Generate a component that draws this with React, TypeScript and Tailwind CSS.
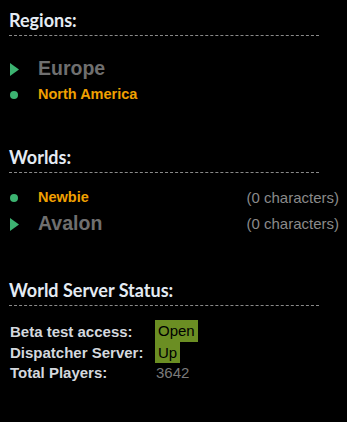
const Heading = ({ title }: { title: string }) => (
	<div className="w-[310px] border-b border-dashed border-[#8a8a8a] pb-[5px]">
		<h2 className="font-['Lato',sans-serif] font-bold text-[18px] leading-5 text-[#e4ebf3]">{title}</h2>
	</div>
)

const Triangle = () => (
	<svg width="9" height="13" viewBox="0 0 9 13" className="shrink-0">
		<polygon points="0,0 9,6.5 0,13" fill="#3cb371" />
	</svg>
)

const Dot = () => <span className="block w-[8px] h-[8px] rounded-full bg-[#3cb371] shrink-0" />

const Row = ({ active, name, extra }: { active: boolean; name: string; extra?: string }) => (
	<div className="flex items-center h-[26px]">
		<div className="w-[28px] flex items-center">
			{active ? <Dot /> : <Triangle />}
		</div>
		{active ? (
			<span className="font-bold text-[14.5px] text-[#f0a000]">{name}</span>
		) : (
			<span className="font-bold text-[19.5px] text-[#6f6f6f]">{name}</span>
		)}
		{extra && <span className="ml-auto text-[15px] text-[#8a8a8a]">{extra}</span>}
	</div>
)

export default function App() {
	return (
		<div className="min-h-[422px] bg-black font-['Liberation_Sans',Arial,sans-serif] pl-[9px] pr-[8px] pt-[10px]">
			<section>
				<Heading title="Regions:" />
				<div className="pl-[1px] mt-[20px]">
					<Row active={false} name="Europe" />
					<Row active name="North America" />
				</div>
			</section>

			<section className="mt-[39px]">
				<Heading title="Worlds:" />
				<div className="pl-[1px] mt-[12px]">
					<Row active name="Newbie" extra="(0 characters)" />
					<Row active={false} name="Avalon" extra="(0 characters)" />
				</div>
			</section>

			<section className="mt-[43px]">
				<Heading title="World Server Status:" />
				<table className="mt-[14px] text-[15px] leading-[19px] border-collapse">
					<tbody>
						<tr className="h-[22px]">
							<td className="font-bold text-[#d4d8de] py-0 pr-0 pl-[1px] w-[146px]">Beta test access:</td>
							<td className="p-0"><span className="block w-fit bg-[#6b8e23] text-black px-[3px] leading-[22px]">Open</span></td>
						</tr>
						<tr className="h-[21px]">
							<td className="font-bold text-[#d4d8de] py-0 pr-0 pl-[1px]">Dispatcher Server:</td>
							<td className="p-0"><span className="block w-fit bg-[#6b8e23] text-black px-[3px] leading-[21px]">Up</span></td>
						</tr>
						<tr className="h-[19px]">
							<td className="font-bold text-[#d4d8de] py-0 pr-0 pl-[1px]">Total Players:</td>
							<td className="py-0 pr-0 pl-[1px] text-[#7a7a7a]">3642</td>
						</tr>
					</tbody>
				</table>
			</section>
		</div>
	)
}
